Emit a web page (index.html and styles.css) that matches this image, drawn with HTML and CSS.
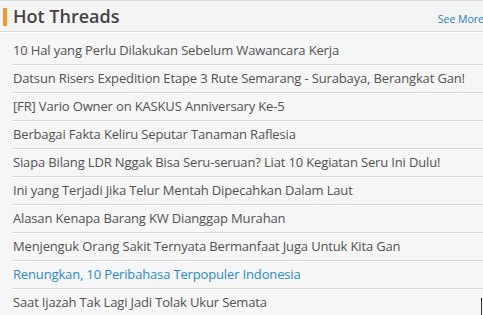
FILE: index.html
```html
<!DOCTYPE html>
<html>
<head>
<meta charset="utf-8">
<link rel="stylesheet" href="styles.css">
</head>
<body>
<div class="panel">
  <div class="panel-head">
    <span class="accent"></span>
    <h2 class="title">Hot Threads</h2>
    <a class="see-more" href="#">See More</a>
  </div>
  <ul class="threads">
    <li class="thread"><a href="#">10 Hal yang Perlu Dilakukan Sebelum Wawancara Kerja</a></li>
    <li class="thread"><a href="#">Datsun Risers Expedition Etape 3 Rute Semarang - Surabaya, Berangkat Gan!</a></li>
    <li class="thread"><a href="#">[FR] Vario Owner on KASKUS Anniversary Ke-5</a></li>
    <li class="thread"><a href="#">Berbagai Fakta Keliru Seputar Tanaman Raflesia</a></li>
    <li class="thread"><a href="#">Siapa Bilang LDR Nggak Bisa Seru-seruan? Liat 10 Kegiatan Seru Ini Dulu!</a></li>
    <li class="thread"><a href="#">Ini yang Terjadi Jika Telur Mentah Dipecahkan Dalam Laut</a></li>
    <li class="thread"><a href="#">Alasan Kenapa Barang KW Dianggap Murahan</a></li>
    <li class="thread"><a href="#">Menjenguk Orang Sakit Ternyata Bermanfaat Juga Untuk Kita Gan</a></li>
    <li class="thread thread-hover"><a href="#">Renungkan, 10 Peribahasa Terpopuler Indonesia</a></li>
    <li class="thread thread-last"><a href="#">Saat Ijazah Tak Lagi Jadi Tolak Ukur Semata</a></li>
  </ul>
  <span class="cursor-mark"></span>
</div>
</body>
</html>
```
FILE: styles.css
```css
html, body {
  margin: 0;
  padding: 0;
  background: #f6f6f6;
  overflow: hidden;
}
body {
  font-family: "Open Sans", "Noto Sans", sans-serif;
  width: 483px;
  height: 315px;
}
.panel {
  position: relative;
  width: 483px;
  height: 315px;
  border-top: 1px solid #dcdcdc;
  box-sizing: border-box;
}
.panel-head {
  display: flex;
  align-items: center;
  height: 30px;
  background: #f4f4f4;
  border-bottom: 1px solid #d9d9d9;
  box-shadow: 0 1px 0 #ffffff;
}
.accent {
  display: block;
  width: 4px;
  height: 18px;
  margin-left: 3px;
  margin-top: 1px;
  background: #f3962b;
}
.title {
  margin: 0 0 0 6px;
  font-size: 18px;
  font-weight: 600;
  color: #444444;
  line-height: 30px;
  flex: 1;
}
.see-more {
  font-size: 10.5px;
  color: #1b7fc0;
  text-decoration: none;
  margin-top: 5px;
  margin-right: -1px;
}
.threads {
  list-style: none;
  margin: 5px 0 0 13px;
  padding: 0;
}
.thread {
  height: 27px;
  line-height: 26px;
  border-bottom: 1px solid #d6d6d6;
  box-shadow: 0 1px 0 #ffffff;
  font-size: 13px;
  letter-spacing: -0.15px;
  white-space: nowrap;
}
.thread a {
  color: #525252;
  text-decoration: none;
}
.thread-hover a {
  color: #2a8ac6;
}
.thread-last {
  border-bottom: none;
  box-shadow: none;
}
.cursor-mark {
  position: absolute;
  left: 481px;
  top: 297px;
  width: 1px;
  height: 18px;
  background: #333333;
  border-top: 2px solid #111111;
}
```
